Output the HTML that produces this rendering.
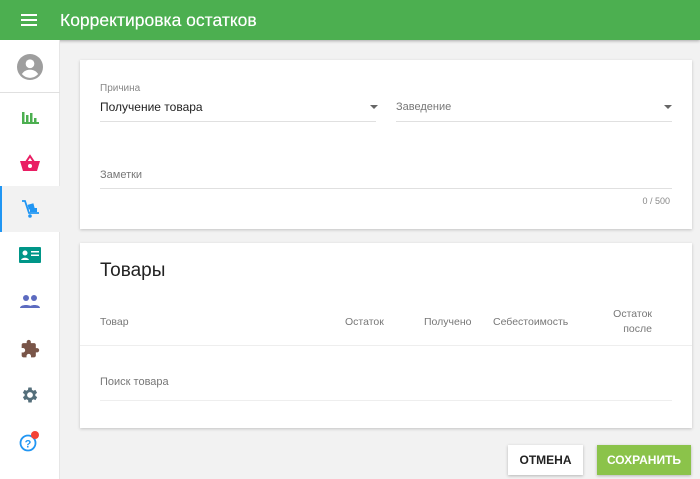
<!DOCTYPE html>
<html><head><meta charset="utf-8"><style>
*{margin:0;padding:0;box-sizing:border-box}
body{width:700px;height:479px;background:#f2f2f2;font-family:"Liberation Sans",Roboto,sans-serif;position:relative;overflow:hidden;color:#222}
.hdr{position:absolute;left:0;top:0;width:700px;height:40px;background:#4caf50;box-shadow:0 1px 3px rgba(0,0,0,.3)}
.hdr .t{position:absolute;left:60px;top:10px;color:#fff;font-size:17.5px;font-weight:normal;text-shadow:0 0 0.4px #fff}
.side{position:absolute;left:0;top:40px;width:60px;height:439px;background:#fff;border-right:1px solid #e6e6e6}
.ic{position:absolute;left:0;width:60px;height:46px;display:flex;align-items:center;justify-content:center}
.card{position:absolute;left:80px;width:612px;background:#fff;box-shadow:0 1px 3px rgba(0,0,0,.2)}
.abs{position:absolute}
.lbl{font-size:10px;color:#888}
.line{position:absolute;height:1px;background:#e0e0e0}
.gray{color:#777;font-size:11px}
.btn{position:absolute;top:445px;height:30px;font-size:12px;font-weight:bold;display:flex;align-items:center;justify-content:center;box-shadow:0 1px 3px rgba(0,0,0,.25)}
</style></head><body>
<div class="hdr">
<svg class="abs" style="left:21px;top:13px" width="16" height="14"><rect y="1" width="16" height="2" fill="#fff"/><rect y="6" width="16" height="2" fill="#fff"/><rect y="11" width="16" height="2" fill="#fff"/></svg>
<div class="t">Корректировка остатков</div></div>
<div class="side">
<div class="ic" style="top:4px;height:46px"><svg width="26" height="26" viewBox="0 0 24 24"><circle cx="12" cy="12" r="12" fill="#9e9e9e"/><circle cx="12" cy="9" r="4" fill="#fff"/><path d="M4.5 18.5c2-3 4.5-4 7.5-4s5.5 1 7.5 4c-2 2.3-4.6 3.5-7.5 3.5s-5.5-1.2-7.5-3.5z" fill="#fff"/></svg></div>
<div class="line" style="left:0;top:52px;width:60px"></div>
<div class="ic" style="top:54px"><svg width="18" height="14"><path d="M1 2h2.5v12H1z M5 5h2.5v9H5z M9 3h2.5v11H9z M13 8h2.5v6H13z M1 12h17v2H1z" fill="#4caf50"/></svg></div>
<div class="ic" style="top:100px"><svg width="20" height="18" viewBox="0 0 20 18"><path d="M6 8L10 2l4 6" stroke="#e91e63" stroke-width="2" fill="none"/><path d="M0 7h20l-3 10H3z" fill="#e91e63"/><circle cx="10" cy="12" r="2" fill="#fff"/></svg></div>
<div class="ic" style="top:146px;background:#f2f2f2;border-left:2px solid #2196f3"><svg width="20" height="20" viewBox="0 0 20 20"><path d="M1 2h3l4 12h10" stroke="#2196f3" stroke-width="1.8" fill="none"/><rect x="7" y="5" width="6" height="5" fill="#2196f3" transform="rotate(-15 10 7)"/><rect x="9" y="9" width="7" height="4" fill="#2196f3"/><circle cx="9" cy="17" r="1.8" fill="#2196f3"/></svg></div>
<div class="ic" style="top:192px"><svg width="22" height="16"><rect width="22" height="16" rx="1" fill="#009688"/><circle cx="6" cy="6" r="2.5" fill="#fff"/><path d="M2 13c1-3 7-3 8 0z" fill="#fff"/><rect x="12" y="4" width="8" height="1.5" fill="#fff"/><rect x="12" y="7.5" width="8" height="1.5" fill="#fff"/></svg></div>
<div class="ic" style="top:238px"><svg width="20" height="14"><circle cx="6" cy="4" r="3" fill="#5c6bc0"/><circle cx="14" cy="4" r="3" fill="#5c6bc0"/><path d="M0 14c0-4 12-4 12 0z M9 14c0-4 11-4 11 0z" fill="#5c6bc0"/></svg></div>
<div class="ic" style="top:286px"><svg width="20" height="20" viewBox="0 0 24 24"><path d="M20.5 11H19V7c0-1.1-.9-2-2-2h-4V3.5a2.5 2.5 0 0 0-5 0V5H4c-1.1 0-2 .9-2 2v3.8h1.5c1.5 0 2.7 1.2 2.7 2.7S5 16.2 3.5 16.2H2V20c0 1.1.9 2 2 2h3.8v-1.5c0-1.5 1.2-2.7 2.7-2.7s2.7 1.2 2.7 2.7V22H17c1.1 0 2-.9 2-2v-4h1.5a2.5 2.5 0 0 0 0-5z" fill="#795548"/></svg></div>
<div class="ic" style="top:332px"><svg width="20" height="20" viewBox="0 0 24 24"><path d="M19.4 13a7.5 7.5 0 0 0 0-2l2.1-1.6-2-3.5-2.5 1a7 7 0 0 0-1.7-1L15 3h-4l-.4 2.9a7 7 0 0 0-1.7 1l-2.5-1-2 3.5L6.6 11a7.5 7.5 0 0 0 0 2l-2.1 1.6 2 3.5 2.5-1a7 7 0 0 0 1.7 1L11 21h4l.4-2.9a7 7 0 0 0 1.7-1l2.5 1 2-3.5zM13 15.5a3.5 3.5 0 1 1 0-7 3.5 3.5 0 0 1 0 7z" fill="#546e7a" transform="translate(-1 0)"/></svg></div>
<div class="ic" style="top:378px"><svg width="24" height="24"><circle cx="10" cy="14" r="7.5" stroke="#2196f3" stroke-width="1.8" fill="none"/><text x="10" y="18.5" font-size="11" font-weight="bold" fill="#2196f3" text-anchor="middle" font-family="Liberation Sans">?</text><circle cx="17" cy="6" r="4" fill="#f44336"/></svg></div>
</div>

<div class="card" style="top:60px;height:169px">
<div class="abs lbl" style="left:20px;top:23px">Причина</div>
<div class="abs" style="left:20px;top:40px;font-size:12px;color:#222">Получение товара</div>
<div class="abs" style="left:290px;top:45px;border:4px solid transparent;border-top:4px solid #666;border-bottom:0"></div>
<div class="line" style="left:20px;top:61px;width:276px"></div>
<div class="abs gray" style="left:316px;top:41px">Заведение</div>
<div class="abs" style="left:584px;top:45px;border:4px solid transparent;border-top:4px solid #666;border-bottom:0"></div>
<div class="line" style="left:316px;top:61px;width:276px"></div>
<div class="abs gray" style="left:20px;top:109px">Заметки</div>
<div class="line" style="left:20px;top:128px;width:572px"></div>
<div class="abs" style="right:22px;top:136px;font-size:9px;color:#888">0 / 500</div>
</div>

<div class="card" style="top:243px;height:185px">
<div class="abs" style="left:20px;top:17px;font-size:19px;color:#222">Товары</div>
<div class="abs gray" style="left:20px;top:73px;font-size:10.5px">Товар</div>
<div class="abs gray" style="left:265px;top:73px;font-size:10.5px">Остаток</div>
<div class="abs gray" style="left:344px;top:73px;font-size:10.5px">Получено</div>
<div class="abs gray" style="left:413px;top:73px;font-size:10.5px">Себестоимость</div>
<div class="abs gray" style="left:526px;top:64px;font-size:10.5px;text-align:right;width:46px;line-height:15px">Остаток<br>после</div>
<div class="line" style="left:0;top:102px;width:612px;background:#eee"></div>
<div class="abs gray" style="left:20px;top:133px">Поиск товара</div>
<div class="line" style="left:20px;top:157px;width:572px;background:#eee"></div>
</div>

<div class="btn" style="left:508px;width:75px;background:#fff;color:#222">ОТМЕНА</div>
<div class="btn" style="left:597px;width:94px;background:#8bc34a;color:#fff">СОХРАНИТЬ</div>
</body></html>
